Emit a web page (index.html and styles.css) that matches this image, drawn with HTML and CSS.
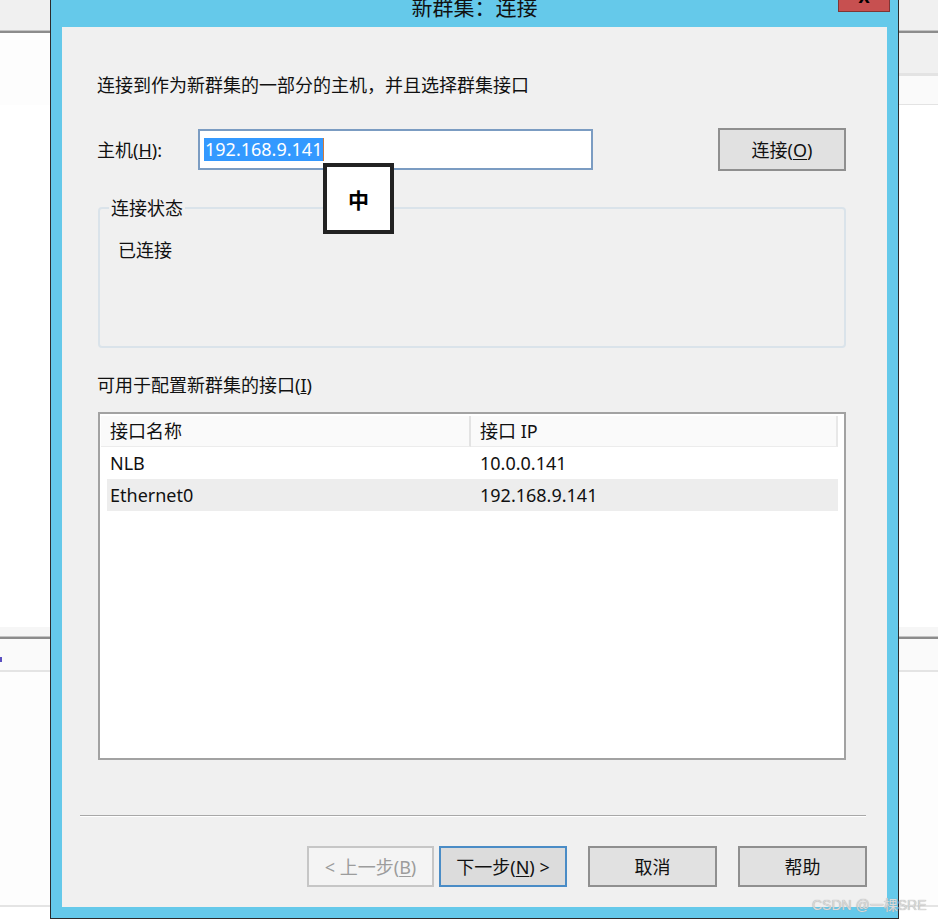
FILE: index.html
```html
<!DOCTYPE html>
<html lang="zh-CN">
<head>
<meta charset="utf-8">
<title>新群集：连接</title>
<link rel="stylesheet" href="styles.css">
</head>
<body>
<div class="desk">
  <div class="bg b-top"></div>
  <div class="bg b-line"></div>
  <div class="bg split h40"><span class="l white"></span><span class="r gray"></span></div>
  <div class="bg split h3"><span class="l white"></span><span class="r mid"></span></div>
  <div class="bg split h28"><span class="l white"></span><span class="r pale"></span></div>
  <div class="bg split h1"><span class="l white"></span><span class="r mid"></span></div>
  <div class="bg white h-gap1"></div>
  <div class="bg b-soft"></div>
  <div class="bg b-line"></div>
  <div class="bg b-row"><span class="mark"></span></div>
  <div class="bg b-thin"></div>
  <div class="bg white h-gap2"></div>
  <div class="bg b-thin"></div>

  <div class="dialog">
    <div class="titlebar">
      <span class="title">新群集：连接</span>
      <span class="close"><span class="x">X</span></span>
    </div>
    <div class="content">
      <p class="intro">连接到作为新群集的一部分的主机，并且选择群集接口</p>
      <div class="host-row">
        <span class="host-label">主机(<u>H</u>):</span>
        <div class="host-input"><span class="sel">192.168.9.141</span><span class="caret"></span></div>
        <button class="btn connect">连接(<u>O</u>)</button>
      </div>
      <fieldset class="status">
        <legend>连接状态</legend>
        <div class="status-text">已连接</div>
      </fieldset>
      <p class="list-label">可用于配置新群集的接口(<u>I</u>)</p>
      <div class="listview">
        <div class="lv-head">
          <div class="hc hc1">接口名称</div>
          <div class="hc hc2">接口 IP</div>
        </div>
        <div class="lv-row"><div class="c1">NLB</div><div class="c2">10.0.0.141</div></div>
        <div class="lv-row alt"><div class="c1">Ethernet0</div><div class="c2">192.168.9.141</div></div>
      </div>
      <div class="sep"></div>
      <div class="btn-row">
        <button class="btn prev">&lt; 上一步(<u>B</u>)</button>
        <button class="btn next">下一步(<u>N</u>) &gt;</button>
        <button class="btn cancel">取消</button>
        <button class="btn help">帮助</button>
      </div>
      <div class="ime">中</div>
    </div>
  </div>
  <div class="watermark">CSDN @一棵SRE</div>
</div>
</body>
</html>
```
FILE: styles.css
```css
* { box-sizing: border-box; }
html, body { margin: 0; padding: 0; }
body {
  width: 938px;
  height: 922px;
  overflow: hidden;
  background: #ffffff;
  font-family: "Noto Sans", "Noto Sans CJK SC", sans-serif;
  font-size: 18px;
  color: #111;
}
.desk { position: relative; width: 938px; height: 922px; overflow: hidden; }

/* background bands */
.bg { width: 100%; }
.b-top { height: 30px; background: #f0f0f0; }
.b-line { height: 3px; background: #8c8c8c; border-top: 1px solid #c4c4c4; }
.split { display: flex; }
.split .l { width: 50px; }
.split .r { flex: 1; }
.h40 { height: 40px; }
.h3 { height: 3px; }
.h28 { height: 28px; }
.h1 { height: 1px; }
.white { background: #fdfdfd; }
.gray { background: #f0f0f0; }
.mid { background: #e3e3e3; }
.pale { background: #fafafa; }
.h-gap1 { height: 522px; background: #ffffff; }
.b-soft { height: 9px; background: #f6f6f6; }
.b-row { height: 31px; background: #fafafa; position: relative; }
.mark { position: absolute; left: 0; top: 18px; width: 2px; height: 5px; background: #5a4fc0; }
.b-thin { height: 2px; background: #e4e4e4; }
.h-gap2 { height: 233px; }

/* dialog window */
.dialog {
  position: absolute;
  left: 50px;
  top: 0;
  width: 849px;
  height: 919px;
  background: #65c9ea;
  border: 1px solid #2b2b2b;
  border-top: none;
  padding: 0 11px 11px 11px;
  display: flex;
  flex-direction: column;
}
.titlebar {
  height: 27px;
  position: relative;
  display: flex;
  justify-content: center;
}
.title {
  font-size: 21px;
  line-height: 22px;
  margin-top: -4px;
  color: #111;
}
.close {
  position: absolute;
  right: -3px;
  top: 0;
  width: 52px;
  height: 12px;
  background: #c75050;
  border: 1px solid #7f3535;
  border-top: none;
  overflow: hidden;
  display: flex;
  justify-content: center;
}
.close .x {
  font-family: "DejaVu Sans", sans-serif;
  font-weight: bold;
  font-size: 15px;
  line-height: 15px;
  margin-top: -9px;
  color: #000;
}

.content {
  position: relative;
  flex: 1;
  background: #f0f0f0;
  padding: 0 41px 0 35px;
}
.intro {
  margin: 46px 0 0 0;
  line-height: 24px;
  white-space: nowrap;
}
.host-row {
  margin-top: 31px;
  height: 43px;
  display: flex;
  align-items: center;
}
.host-label { width: 101px; line-height: 24px; }
.host-input {
  width: 395px;
  height: 41px;
  background: #fff;
  border: 2px solid #7b9cc2;
  display: flex;
  align-items: center;
  padding-left: 4px;
}
.sel {
  background: #3399ff;
  color: #fff;
  line-height: 23px;
  padding: 0 1px;
}
.caret { width: 1px; height: 23px; background: #d07a3a; }

.btn {
  font-family: inherit;
  font-size: 18px;
  color: #111;
  background: #e1e1e1;
  border: 2px solid #8f8f8f;
  padding: 0;
  height: 41px;
  line-height: 24px;
}
.btn u { text-decoration-thickness: 1px; text-underline-offset: 2px; }
.connect { margin-left: auto; width: 128px; height: 43px; }

.status {
  margin: 25px 0 0 1px;
  width: 748px;
  height: 152px;
  border: 2px solid #dae3ea;
  border-radius: 4px;
  padding: 18px 0 0 18px;
  min-inline-size: 0;
}
.status legend {
  margin-left: -9px;
  padding: 0 2px;
  line-height: 24px;
}
.status-text { line-height: 24px; }

.list-label { margin: 25px 0 0 0; line-height: 24px; }

.listview {
  margin: 15px 0 0 1px;
  width: 748px;
  height: 348px;
  background: #fff;
  border: 2px solid #a2a2a2;
  padding: 2px 6px 0 1px;
}
.lv-head { display: flex; height: 31px; }
.hc {
  background: #fafafa;
  border-bottom: 1px solid #ececec;
  line-height: 30px;
  padding-left: 9px;
}
.hc1 { width: 370px; border-right: 2px solid #e3e3e3; }
.hc2 { flex: 1; border-right: 2px solid #e8e8e8; }
.lv-row {
  display: flex;
  height: 32px;
  line-height: 32px;
  margin-left: 6px;
}
.lv-row.alt { background: #ededed; }
.c1 { width: 364px; padding-left: 3px; }
.c2 { flex: 1; padding-left: 9px; }

.sep {
  margin: 55px 0 0 -17px;
  width: 786px;
  height: 2px;
  border-top: 1px solid #a8a8a8;
  border-bottom: 1px solid #ffffff;
}
.btn-row {
  margin: 29px -21px 0 0;
  display: flex;
  justify-content: flex-end;
}
.prev { width: 127px; background: #f4f4f4; border-color: #c6c6c6; color: #9c9c9c; }
.next { width: 128px; margin-left: 5px; background: #dcdcdc; border-color: #4a8cc6; }
.cancel { width: 129px; margin-left: 21px; }
.help { width: 129px; margin-left: 21px; }

.ime {
  position: absolute;
  left: 261px;
  top: 136px;
  width: 71px;
  height: 71px;
  background: #fff;
  border: 4px solid #222;
  display: flex;
  align-items: center;
  justify-content: center;
  font-family: "Noto Sans CJK SC", sans-serif;
  font-weight: bold;
  font-size: 21px;
  color: #000;
}

.watermark {
  position: absolute;
  left: 812px;
  top: 896px;
  font-family: "Liberation Sans", "Noto Sans CJK SC", sans-serif;
  font-size: 14px;
  line-height: 18px;
  color: #dadada;
  text-shadow: 0 0 1px #9a9a9a;
  white-space: nowrap;
}
```
